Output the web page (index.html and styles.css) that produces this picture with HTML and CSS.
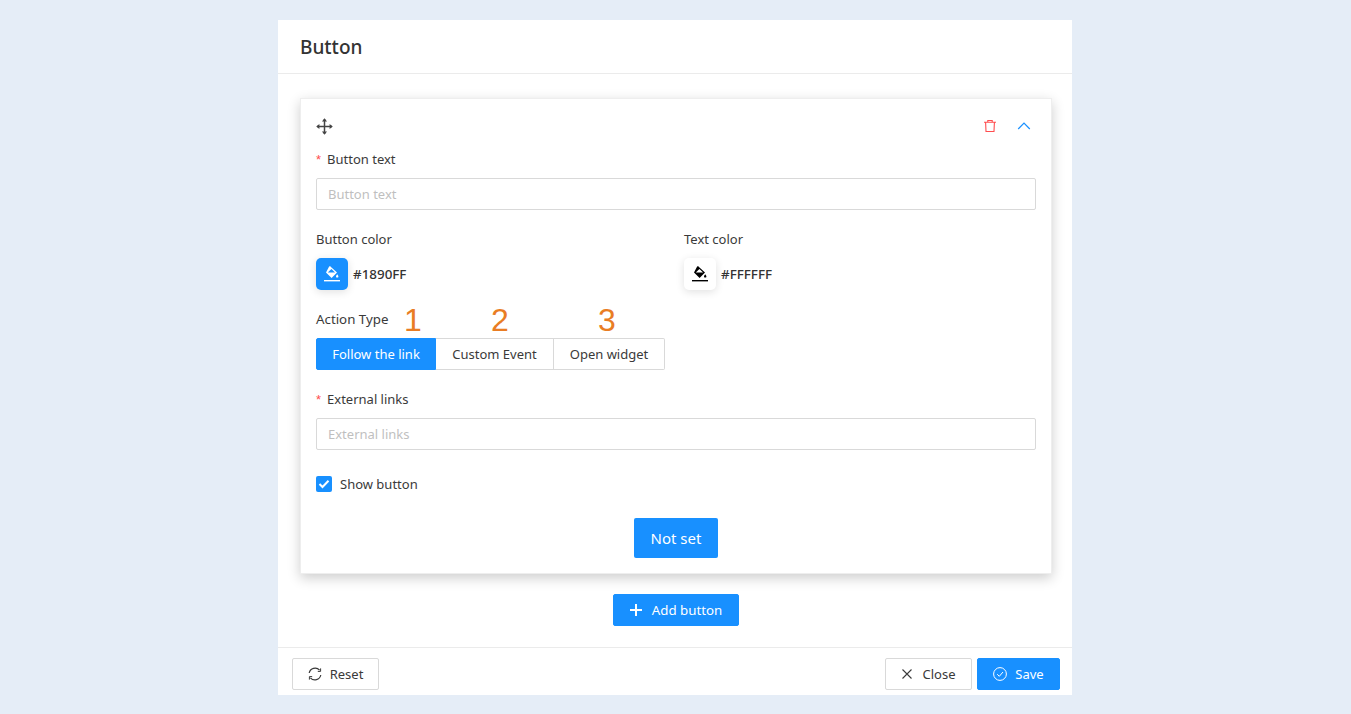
FILE: index.html
```html
<!DOCTYPE html>
<html lang="en">
<head>
<meta charset="utf-8">
<title>Button</title>
<link rel="stylesheet" href="styles.css">
</head>
<body>
<main class="panel">
  <header class="panel-head">Button</header>
  <section class="panel-body">
    <div class="card">
      <div class="card-top">
        <svg class="ico-move" width="17" height="17" viewBox="0 0 16 16" fill="none" stroke="#444" stroke-width="1.400"><path d="M8 1v14M1 8h14"/><path d="M8 .2 5.600 3.200h4.800zM8 15.800 5.600 12.800h4.800zM.2 8 3.200 5.600v4.800zM15.800 8 12.800 5.600v4.800z" fill="#444" stroke="none"/></svg>
        <div class="card-actions">
          <svg width="14" height="14" viewBox="0 0 14 14" fill="none" stroke="#ff4d4f" stroke-width="1.100"><path d="M1 3.300h12M4.800 3.300V1.500h4.400v1.800M2.600 3.300l.4 9.200h8l.4-9.200"/></svg>
          <svg width="14" height="14" viewBox="0 0 14 14" fill="none" stroke="#1890ff" stroke-width="1.200"><path d="M1.200 10 7 4l5.800 6"/></svg>
        </div>
      </div>
      <label class="label"><span class="req">*</span>Button text</label>
      <input class="input" type="text" placeholder="Button text">
      <div class="colors">
        <div class="color-col">
          <div class="label">Button color</div>
          <div class="color-row">
            <span class="swatch swatch-blue"><svg width="16" height="16" viewBox="0 0 16 16" fill="#fff"><path d="M5 .8 6 0l1.200 1.300L13 6.600 7.600 12 2 6.600z M3.800 6.600h7.300L7.400 3z" fill-rule="evenodd"/><path d="M13.200 8.200c.7 1 1.200 1.600 1.200 2.200a1.200 1.200 0 0 1-2.400 0c0-.6.500-1.200 1.200-2.200z"/><rect x="0" y="14" width="16" height="1.400"/></svg></span>
            <span class="hex">#1890FF</span>
          </div>
        </div>
        <div class="color-col">
          <div class="label">Text color</div>
          <div class="color-row">
            <span class="swatch swatch-white"><svg width="16" height="16" viewBox="0 0 16 16" fill="#000"><path d="M5 .8 6 0l1.200 1.300L13 6.600 7.600 12 2 6.600z M3.800 6.600h7.300L7.400 3z" fill-rule="evenodd"/><path d="M13.200 8.200c.7 1 1.200 1.600 1.200 2.200a1.200 1.200 0 0 1-2.400 0c0-.6.500-1.200 1.200-2.200z"/><rect x="0" y="14" width="16" height="1.400"/></svg></span>
            <span class="hex">#FFFFFF</span>
          </div>
        </div>
      </div>
      <div class="action-wrap">
        <div class="label label-action">Action Type</div>
        <span class="anno anno-1">1</span>
        <span class="anno anno-2">2</span>
        <span class="anno anno-3">3</span>
        <div class="segment">
          <span class="seg seg-on">Follow the link</span>
          <span class="seg seg-mid">Custom Event</span>
          <span class="seg seg-last">Open widget</span>
        </div>
      </div>
      <label class="label label-ext"><span class="req">*</span>External links</label>
      <input class="input" type="text" placeholder="External links">
      <div class="check-row">
        <span class="check"><svg width="12" height="10" viewBox="0 0 12 10" fill="none" stroke="#fff" stroke-width="2"><path d="M1.500 5 4.500 8 10.500 1.800"/></svg></span>
        <span>Show button</span>
      </div>
      <div class="preview-row"><button class="btn-preview" type="button">Not set</button></div>
    </div>
    <div class="add-row">
      <button class="btn btn-primary btn-add" type="button">
        <svg width="12" height="12" viewBox="0 0 12 12" stroke="#fff" stroke-width="2"><path d="M6 0v12M0 6h12"/></svg>Add button</button>
    </div>
  </section>
  <footer class="panel-foot">
    <button class="btn btn-default btn-reset" type="button">
      <svg width="14" height="14" viewBox="0 0 14 14" fill="none" stroke="#3a3a3a" stroke-width="1.200"><path d="M1.200 6A6 6 0 0 1 11.600 3.200M12.800 8A6 6 0 0 1 2.400 10.800"/><path d="M12.600 1.400v3H9.800M1.400 12.600v-3h2.800" stroke-width="1"/></svg>Reset</button>
    <div class="foot-right">
      <button class="btn btn-default btn-close" type="button">
        <svg width="10" height="10" viewBox="0 0 10 10" stroke="#3a3a3a" stroke-width="1.100"><path d="M.5.500l9 9M9.500.500l-9 9"/></svg>Close</button>
      <button class="btn btn-primary btn-save" type="button">
        <svg width="14" height="14" viewBox="0 0 14 14" fill="none" stroke="#fff" stroke-width="1"><circle cx="7" cy="7" r="6.400"/><path d="M4.200 7.200 6.300 9.300 10 5"/></svg>Save</button>
    </div>
  </footer>
</main>
</body>
</html>
```

FILE: styles.css
```css
* { box-sizing: border-box; }
html, body { height: 100%; }
body {
  margin: 0;
  background: #e5edf7;
  font-family: "Noto Sans", "Open Sans", "Liberation Sans", sans-serif;
  font-size: 13px;
  color: #3a3a3a;
  overflow: hidden;
}
.panel {
  width: 794px;
  height: 675px;
  margin: 20px 0 0 278px;
  background: #fff;
  display: flex;
  flex-direction: column;
}
.panel-head {
  height: 54px;
  padding: 0 22px;
  border-bottom: 1px solid #ebebeb;
  font-size: 19px;
  font-weight: 500;
  line-height: 54px;
  flex: none;
  color: #333;
}
.panel-body {
  flex: 1;
  padding: 24px 20px 0 22px;
}
.card {
  height: 476px;
  padding: 0 15px;
  border: 1px solid #eee;
  box-shadow: 0 4px 12px rgba(0, 0, 0, .2);
  background: #fff;
}
.card-top {
  height: 50px;
  display: flex;
  justify-content: space-between;
  align-items: center;
  padding: 4px 5px 0 0;
}
.card-actions { display: flex; gap: 20px; }
.label {
  display: block;
  height: 20px;
  line-height: 20px;
  white-space: nowrap;
}
.label-action { font-size: 13.300px; }
.req { color: #ff4d4f; margin-right: 6px; font-family: "Liberation Sans", sans-serif; }
.input {
  display: block;
  width: 100%;
  height: 32px;
  margin-top: 9px;
  padding: 0 11px;
  border: 1px solid #d9d9d9;
  border-radius: 2px;
  font: inherit;
  outline: none;
}
.input::placeholder { color: #bfbfbf; opacity: 1; }
.colors { display: flex; margin-top: 19px; }
.color-col { width: 368px; flex: none; }
.color-row {
  display: flex;
  align-items: center;
  gap: 5px;
  margin-top: 9px;
}
.swatch {
  width: 32px;
  height: 32px;
  border-radius: 5px;
  display: flex;
  align-items: center;
  justify-content: center;
  box-shadow: 0 2px 8px rgba(0, 0, 0, .12);
}
.swatch-blue { background: #1890ff; }
.swatch-white { background: #fff; }
.hex { font-size: 13.400px; font-weight: 500; color: #333; }
.action-wrap { position: relative; margin-top: 19px; }
.anno {
  position: absolute;
  top: -7px;
  font-family: "Liberation Sans", sans-serif;
  font-size: 32px;
  line-height: 36px;
  color: #e97d24;
}
.anno-1 { left: 88px; }
.anno-2 { left: 175px; }
.anno-3 { left: 282px; }
.segment { display: flex; margin-top: 9px; height: 32px; }
.seg {
  height: 32px;
  line-height: 30px;
  border: 1px solid #d9d9d9;
  border-left-width: 0;
  text-align: center;
  white-space: nowrap;
}
.seg-on {
  width: 120px;
  background: #1890ff;
  border-color: #1890ff;
  border-left-width: 1px;
  color: #fff;
  border-radius: 2px 0 0 2px;
}
.seg-mid { width: 118px; }
.seg-last { width: 111px; border-radius: 0 2px 2px 0; }
.label-ext { margin-top: 19px; }
.check-row {
  display: flex;
  align-items: center;
  gap: 8px;
  height: 20px;
  margin-top: 24px;
}
.check {
  width: 16px;
  height: 16px;
  border-radius: 2px;
  background: #1890ff;
  display: flex;
  align-items: center;
  justify-content: center;
}
.preview-row { display: flex; justify-content: center; margin-top: 24px; }
.btn-preview {
  width: 84px;
  height: 40px;
  border: 0;
  border-radius: 2px;
  background: #1890ff;
  color: #fff;
  font: inherit;
  font-size: 15px;
}
.add-row { display: flex; justify-content: center; margin-top: 20px; }
.btn {
  height: 32px;
  border-radius: 2px;
  font: inherit;
  display: flex;
  align-items: center;
  justify-content: center;
  padding: 0;
}
.btn-primary { background: #1890ff; border: 1px solid #1890ff; color: #fff; }
.btn-default { background: #fff; border: 1px solid #d9d9d9; color: #3a3a3a; }
.btn-add { width: 126px; gap: 10px; font-size: 13.300px; }
.panel-foot {
  height: 48px;
  flex: none;
  border-top: 1px solid #ebebeb;
  padding: 10px 12px 0 14px;
  display: flex;
  justify-content: space-between;
}
.foot-right { display: flex; gap: 5px; }
.btn-reset { width: 87px; gap: 8px; }
.btn-close { width: 87px; gap: 11px; }
.btn-save { width: 83px; gap: 8px; }
```
